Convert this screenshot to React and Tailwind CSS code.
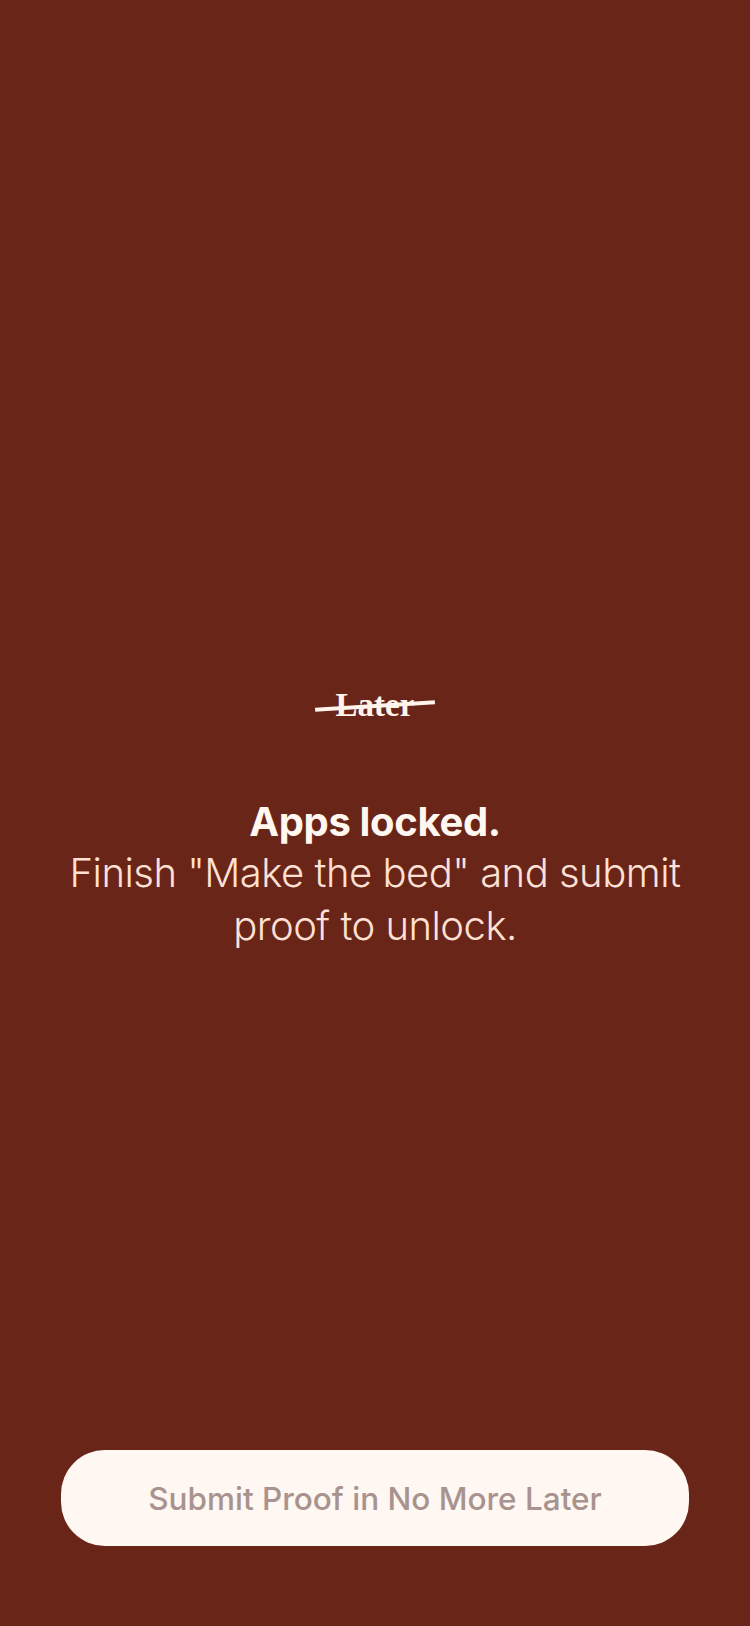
import React from "react";

export default function App() {
  return (
    <div className="flex flex-col h-[1626px] w-[750px] bg-[#682518] font-['Inter',sans-serif]">
      <div className="flex flex-col items-center pt-[685px]">
        <div className="relative flex justify-center w-[120px]">
          <span className="font-['Liberation_Serif',serif] font-bold text-[33px] leading-[40px] text-[#fff3ea]">
            Later
          </span>
          <div className="absolute left-0 top-[19px] h-[4px] w-[120px] bg-[#fff3ea] -rotate-[3.5deg]" />
        </div>
        <div className="mt-[73px] px-[50px] text-center">
          <h1 className="font-bold text-[40px] leading-[48px] tracking-[-0.35px] text-[#fff7f0]">
            Apps locked.
          </h1>
          <p className="text-[40px] leading-[53px] font-light tracking-[-0.5px] text-[#ffe0d4]">
            Finish "Make the bed" and submit proof to unlock.
          </p>
        </div>
      </div>
      <div className="mt-auto px-[61px] pb-[80px]">
        <button className="w-full h-[96px] rounded-[44px] bg-[#fff7f1] pt-[1px] text-[31.5px] font-medium text-[#a8938e]">
          Submit Proof in No More Later
        </button>
      </div>
    </div>
  );
}
